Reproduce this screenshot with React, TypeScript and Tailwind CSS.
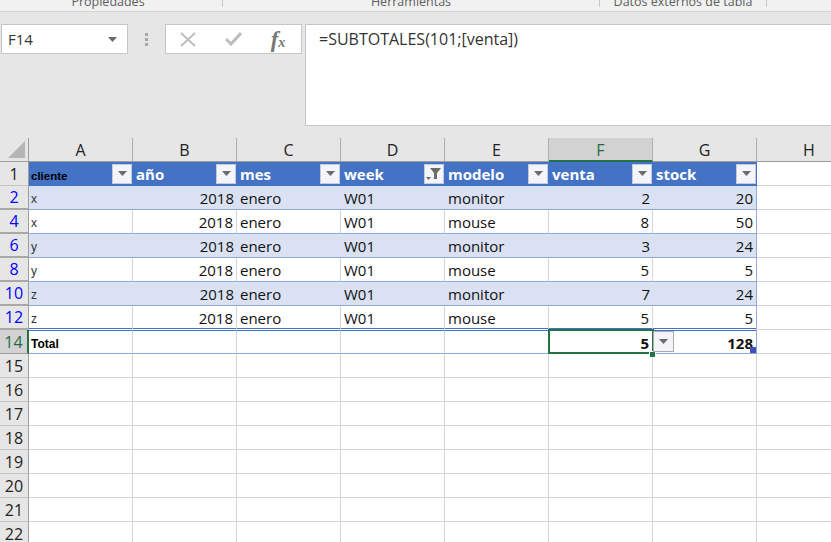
import * as React from "react";

const sans = "font-['Open_Sans',sans-serif]";
const arial = "font-['Liberation_Sans',sans-serif]";

const columns = ["A", "B", "C", "D", "E", "F", "G"];
const rowGrid = "grid grid-cols-[29px_repeat(8,104px)] grid-rows-[24px] h-[24px] leading-none";

const dataRows = [
  { row: "2", cliente: "x", mes: "enero", week: "W01", modelo: "monitor", venta: "2", stock: "20" },
  { row: "4", cliente: "x", mes: "enero", week: "W01", modelo: "mouse", venta: "8", stock: "50" },
  { row: "6", cliente: "y", mes: "enero", week: "W01", modelo: "monitor", venta: "3", stock: "24" },
  { row: "8", cliente: "y", mes: "enero", week: "W01", modelo: "mouse", venta: "5", stock: "5" },
  { row: "10", cliente: "z", mes: "enero", week: "W01", modelo: "monitor", venta: "7", stock: "24" },
  { row: "12", cliente: "z", mes: "enero", week: "W01", modelo: "mouse", venta: "5", stock: "5" },
];

const headers = [
  { label: "cliente", small: true },
  { label: "año" },
  { label: "mes" },
  { label: "week", filtered: true },
  { label: "modelo" },
  { label: "venta" },
  { label: "stock" },
];

function Arrow() {
  return (
    <svg width="9" height="5" viewBox="0 0 9 5">
      <path d="M0 0h9L4.5 5z" fill="#6a6a6a" />
    </svg>
  );
}

function FilterButton({ filtered }: { filtered?: boolean }) {
  return (
    <div className="w-[20px] h-[20px] mr-px shrink-0 bg-[#f4f5f8] border border-[#c3cbdc] flex items-center justify-center">
      {filtered ? (
        <svg width="16" height="14" viewBox="0 0 16 14">
          <path d="M4 1h11L11 6v6H8V6z" fill="#6a6a6a" />
          <path d="M0 10h5L2.5 13z" fill="#6a6a6a" />
        </svg>
      ) : (
        <Arrow />
      )}
    </div>
  );
}

function RowHeader({ label, filtered, selected }: { label: string; filtered?: boolean; selected?: boolean }) {
  return (
    <div
      className={
        "flex items-center justify-center text-[16px] border-r " +
        (selected
          ? "bg-[#d2d2d2] text-[#1f6b45] border-r-[2px] border-r-[#217346] border-b border-b-[#9e9e9e] "
          : filtered
            ? "bg-[#e6e6e6] text-[#0000ff] border-r-[#9e9e9e] border-b-[2px] border-b-[#a8a8a8] "
            : "bg-[#e6e6e6] text-[#222] border-r-[#9e9e9e] border-b border-b-[#c4c4c4] ")
      }
    >
      {label}
    </div>
  );
}

function Ribbon() {
  const groups = [
    { label: "Propiedades", w: "w-[223px] pr-[6px]" },
    { label: "Herramientas", w: "w-[377px]" },
    { label: "Datos externos de tabla", w: "w-[167px]" },
  ];
  return (
    <div className="h-[12px] bg-[#f1f1f1] border-b border-[#d4d4d4] flex overflow-hidden">
      {groups.map((g) => (
        <div key={g.label} className={g.w + " h-[7px] border-r border-[#c8c8c8] flex justify-center"}>
          <span className="text-[12.5px] leading-[12px] -mt-[4px] text-[#5e5e5e]">{g.label}</span>
        </div>
      ))}
    </div>
  );
}

function FormulaBar() {
  return (
    <div className="h-[126px] bg-[#e6e6e6] flex items-start pt-[12px] pl-px">
      <div className="w-[127px] h-[30px] bg-white border border-[#c6c6c6] flex items-center justify-between pl-[6px] pr-[10px] text-[15px] text-[#333]">
        <span>F14</span>
        <Arrow />
      </div>
      <div className="w-[37px] h-[30px] flex flex-col items-center justify-center gap-[2px]">
        <span className="w-[3px] h-[3px] bg-[#a8a8a8]" />
        <span className="w-[3px] h-[3px] bg-[#a8a8a8]" />
        <span className="w-[3px] h-[3px] bg-[#a8a8a8]" />
      </div>
      <div className="w-[137px] h-[30px] bg-white border border-[#c6c6c6] flex items-center">
        <div className="w-[44px] flex justify-center">
          <svg width="16" height="15" viewBox="0 0 16 15">
            <path d="M1 1l14 13M15 1L1 14" stroke="#bdbdbd" strokeWidth="2" fill="none" />
          </svg>
        </div>
        <div className="w-[46px] flex justify-center">
          <svg width="17" height="14" viewBox="0 0 17 14">
            <path d="M1 7l5 5L16 1" stroke="#bdbdbd" strokeWidth="3" fill="none" />
          </svg>
        </div>
        <div className="w-[44px] text-center font-['Liberation_Serif',serif] italic font-bold leading-none text-[#777]">
          <span className="text-[23px]">f</span>
          <span className="text-[14px]">x</span>
        </div>
      </div>
      <div className="ml-[3px] flex-1 h-[102px] bg-white border-l border-b border-t border-[#c6c6c6] pl-[13px] pt-[4px] text-[16px] leading-[20px] text-[#333]">
        =SUBTOTALES(101;[venta])
      </div>
    </div>
  );
}

function ColumnHeaders() {
  return (
    <div className={rowGrid + " bg-[#e6e6e6]"}>
      <div className="border-r border-b border-[#9e9e9e] flex items-end justify-end pr-[3px] pb-[3px]">
        <svg width="17" height="17" viewBox="0 0 17 17">
          <path d="M17 0v17H0z" fill="#b5b5b5" />
        </svg>
      </div>
      {columns.map((c) => (
        <div
          key={c}
          className={
            "flex items-center justify-center pt-px text-[16px] border-r border-[#aeaeae] " +
            (c === "F"
              ? "bg-[#d2d2d2] text-[#1f6b45] border-b-[2px] border-b-[#217346]"
              : "text-[#222] border-b border-b-[#9e9e9e]")
          }
        >
          {c}
        </div>
      ))}
      <div className="flex items-center justify-center pt-px text-[16px] text-[#222] border-b border-[#9e9e9e]">H</div>
    </div>
  );
}

function HeaderRow() {
  return (
    <div className={rowGrid}>
      <RowHeader label="1" />
      {headers.map((h) => (
        <div
          key={h.label}
          className="bg-[#4472c4] flex items-center justify-between pl-[3px] border-b border-[#4472c4]"
        >
          <span
            className={
              h.small
                ? arial + " text-[11.5px] font-bold text-black pt-[6px] -ml-px"
                : "text-[15px] font-bold text-white pt-[2px]"
            }
          >
            {h.label}
          </span>
          <FilterButton filtered={h.filtered} />
        </div>
      ))}
      <div className="border-b border-[#d4d4d4]" />
    </div>
  );
}

function DataRow({ data, band, last }: { data: (typeof dataRows)[number]; band: boolean; last: boolean }) {
  const bg = band ? "bg-[#d9e1f2]" : "bg-white";
  // last row leaves a white gap so that it forms a double line with the total row
  const line = last ? "border-b-white shadow-[inset_0_-1px_0_#4472c4]" : "border-b-[#8ea9db]";
  const cell = "flex items-center border-b " + line + " " + bg + " ";
  const divider = band ? "" : "border-r border-r-[#d4d4d4] ";
  return (
    <div className={rowGrid}>
      <RowHeader label={data.row} filtered />
      <div className={cell + divider + arial + " pl-[2px] pt-[3px] text-[12px] text-[#333]"}>{data.cliente}</div>
      <div className={cell + divider + "justify-end pr-[3px] pt-[2px]"}>2018</div>
      <div className={cell + divider + "pl-[3px] pt-[2px]"}>{data.mes}</div>
      <div className={cell + divider + "pl-[3px] pt-[2px]"}>{data.week}</div>
      <div className={cell + divider + "pl-[3px] pt-[2px]"}>{data.modelo}</div>
      <div className={cell + divider + "justify-end pr-[3px] pt-[2px]"}>{data.venta}</div>
      <div className={cell + "justify-end pr-[3px] pt-[2px] border-r border-r-[#8ea9db]"}>{data.stock}</div>
      <div className="border-b border-[#d4d4d4]" />
    </div>
  );
}

function TotalRow() {
  const cell = "border-b border-b-[#8ea9db] border-t border-t-[#4472c4] border-r border-r-[#d4d4d4] flex items-center";
  return (
    <div className={rowGrid + " relative"}>
      <RowHeader label="14" selected />
      <div className={cell + " " + arial + " pl-[2px] pt-[4px] text-[12px] font-bold text-black"}>Total</div>
      <div className={cell} />
      <div className={cell} />
      <div className={cell} />
      <div className={cell} />
      <div className={cell + " justify-end pr-[3px] pt-[2px] font-bold"}>5</div>
      <div className="border-b border-b-[#8ea9db] border-t border-t-[#4472c4] border-r border-r-[#8ea9db] flex items-center justify-end pr-[3px] pt-[2px] font-bold">
        128
      </div>
      <div className="border-b border-[#d4d4d4]" />
      {/* active cell frame, list arrow and table resize handle sit over the grid */}
      <div className="absolute left-[548px] top-[-1px] w-[106px] h-[25px] border-2 border-[#217346]" />
      <div className="absolute left-[650px] top-[22px] w-[5px] h-[5px] bg-[#217346] outline outline-1 outline-white" />
      <div className="absolute left-[653px] top-[1px] w-[21px] h-[21px] bg-[#f4f4f6] border border-[#ababab] flex items-center justify-center">
        <Arrow />
      </div>
      <div className="absolute left-[750px] top-[17px] w-[6px] h-[6px] bg-[#3f51b5]" />
    </div>
  );
}

function EmptyRow({ label }: { label: string }) {
  return (
    <div className={rowGrid}>
      <RowHeader label={label} />
      {columns.map((c) => (
        <div key={c} className="border-r border-b border-[#d4d4d4]" />
      ))}
      <div className="border-b border-[#d4d4d4]" />
    </div>
  );
}

export default function App() {
  return (
    <div className={"w-[831px] h-[542px] overflow-hidden bg-white text-[15px] text-[#111] " + sans}>
      <Ribbon />
      <FormulaBar />
      <ColumnHeaders />
      <HeaderRow />
      {dataRows.map((d, i) => (
        <DataRow key={d.row} data={d} band={i % 2 === 0} last={i === dataRows.length - 1} />
      ))}
      <TotalRow />
      {["15", "16", "17", "18", "19", "20", "21", "22"].map((r) => (
        <EmptyRow key={r} label={r} />
      ))}
    </div>
  );
}
